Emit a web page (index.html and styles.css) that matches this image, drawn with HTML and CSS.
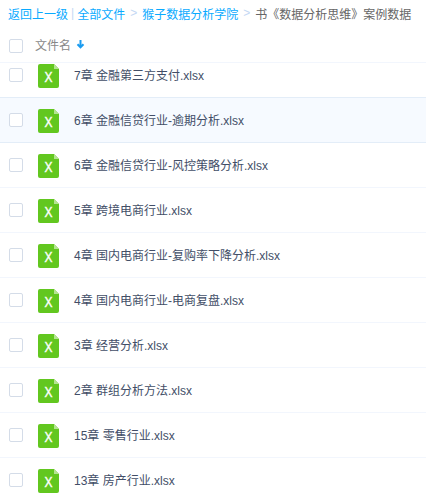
FILE: index.html
```html
<!DOCTYPE html>
<html>
    <head>
        <meta charset="utf-8">
        <title>全部文件</title>
        <link rel="stylesheet" href="styles.css">
    </head>

    <body>
        <div class="crumbs">
            <a>返回上一级</a>
            <span class="pipe">|</span>
            <a>全部文件</a>
            <span class="sep">&gt;</span>
            <a>猴子数据分析学院</a>
            <span class="sep">&gt;</span>
            <span class="current">书《数据分析思维》案例数据</span>
        </div>
        <div class="listHeader">
            <span class="check"></span>
            <span class="headName">文件名</span>
            <svg class="sortArrow" width="9" height="10" viewBox="0 0 9 10"><path d="M4.5 1v7M1.5 5.2l3 3.2 3-3.2" fill="none" stroke="#1a9bf0" stroke-width="2"/></svg>
        </div>
        <div class="listView">
            <div class="listInner">
                <div class="row"><span class="check"></span><svg class="xls" width="21" height="24" viewBox="0 0 21 24"><path d="M2 0h14l5 5v17a2 2 0 0 1-2 2H2a2 2 0 0 1-2-2V2a2 2 0 0 1 2-2z" fill="#62c71f"/><path d="M16 0l5 5h-5z" fill="#b5e392"/><text x="10.5" y="18" class="xlsMark" textLength="8" lengthAdjust="spacingAndGlyphs">X</text></svg><span class="name">7章 金融第三方支付.xlsx</span></div>
                <div class="row hover"><span class="check"></span><svg class="xls" width="21" height="24" viewBox="0 0 21 24"><path d="M2 0h14l5 5v17a2 2 0 0 1-2 2H2a2 2 0 0 1-2-2V2a2 2 0 0 1 2-2z" fill="#62c71f"/><path d="M16 0l5 5h-5z" fill="#b5e392"/><text x="10.5" y="18" class="xlsMark" textLength="8" lengthAdjust="spacingAndGlyphs">X</text></svg><span class="name">6章 金融信贷行业-逾期分析.xlsx</span></div>
                <div class="row"><span class="check"></span><svg class="xls" width="21" height="24" viewBox="0 0 21 24"><path d="M2 0h14l5 5v17a2 2 0 0 1-2 2H2a2 2 0 0 1-2-2V2a2 2 0 0 1 2-2z" fill="#62c71f"/><path d="M16 0l5 5h-5z" fill="#b5e392"/><text x="10.5" y="18" class="xlsMark" textLength="8" lengthAdjust="spacingAndGlyphs">X</text></svg><span class="name">6章 金融信贷行业-风控策略分析.xlsx</span></div>
                <div class="row"><span class="check"></span><svg class="xls" width="21" height="24" viewBox="0 0 21 24"><path d="M2 0h14l5 5v17a2 2 0 0 1-2 2H2a2 2 0 0 1-2-2V2a2 2 0 0 1 2-2z" fill="#62c71f"/><path d="M16 0l5 5h-5z" fill="#b5e392"/><text x="10.5" y="18" class="xlsMark" textLength="8" lengthAdjust="spacingAndGlyphs">X</text></svg><span class="name">5章 跨境电商行业.xlsx</span></div>
                <div class="row"><span class="check"></span><svg class="xls" width="21" height="24" viewBox="0 0 21 24"><path d="M2 0h14l5 5v17a2 2 0 0 1-2 2H2a2 2 0 0 1-2-2V2a2 2 0 0 1 2-2z" fill="#62c71f"/><path d="M16 0l5 5h-5z" fill="#b5e392"/><text x="10.5" y="18" class="xlsMark" textLength="8" lengthAdjust="spacingAndGlyphs">X</text></svg><span class="name">4章 国内电商行业-复购率下降分析.xlsx</span></div>
                <div class="row"><span class="check"></span><svg class="xls" width="21" height="24" viewBox="0 0 21 24"><path d="M2 0h14l5 5v17a2 2 0 0 1-2 2H2a2 2 0 0 1-2-2V2a2 2 0 0 1 2-2z" fill="#62c71f"/><path d="M16 0l5 5h-5z" fill="#b5e392"/><text x="10.5" y="18" class="xlsMark" textLength="8" lengthAdjust="spacingAndGlyphs">X</text></svg><span class="name">4章 国内电商行业-电商复盘.xlsx</span></div>
                <div class="row"><span class="check"></span><svg class="xls" width="21" height="24" viewBox="0 0 21 24"><path d="M2 0h14l5 5v17a2 2 0 0 1-2 2H2a2 2 0 0 1-2-2V2a2 2 0 0 1 2-2z" fill="#62c71f"/><path d="M16 0l5 5h-5z" fill="#b5e392"/><text x="10.5" y="18" class="xlsMark" textLength="8" lengthAdjust="spacingAndGlyphs">X</text></svg><span class="name">3章 经营分析.xlsx</span></div>
                <div class="row"><span class="check"></span><svg class="xls" width="21" height="24" viewBox="0 0 21 24"><path d="M2 0h14l5 5v17a2 2 0 0 1-2 2H2a2 2 0 0 1-2-2V2a2 2 0 0 1 2-2z" fill="#62c71f"/><path d="M16 0l5 5h-5z" fill="#b5e392"/><text x="10.5" y="18" class="xlsMark" textLength="8" lengthAdjust="spacingAndGlyphs">X</text></svg><span class="name">2章 群组分析方法.xlsx</span></div>
                <div class="row"><span class="check"></span><svg class="xls" width="21" height="24" viewBox="0 0 21 24"><path d="M2 0h14l5 5v17a2 2 0 0 1-2 2H2a2 2 0 0 1-2-2V2a2 2 0 0 1 2-2z" fill="#62c71f"/><path d="M16 0l5 5h-5z" fill="#b5e392"/><text x="10.5" y="18" class="xlsMark" textLength="8" lengthAdjust="spacingAndGlyphs">X</text></svg><span class="name">15章 零售行业.xlsx</span></div>
                <div class="row"><span class="check"></span><svg class="xls" width="21" height="24" viewBox="0 0 21 24"><path d="M2 0h14l5 5v17a2 2 0 0 1-2 2H2a2 2 0 0 1-2-2V2a2 2 0 0 1 2-2z" fill="#62c71f"/><path d="M16 0l5 5h-5z" fill="#b5e392"/><text x="10.5" y="18" class="xlsMark" textLength="8" lengthAdjust="spacingAndGlyphs">X</text></svg><span class="name">13章 房产行业.xlsx</span></div>
            </div>
        </div>
    </body>
</html>
```

FILE: styles.css
```css
html, body {
 margin: 0;
 height: 496px;
 overflow: hidden;
 background-color: #fff;
}
body {
 font-family: "Liberation Sans", "Noto Sans CJK SC", sans-serif;
 font-size: 12px;
 color: #424e67;
}
.crumbs {
 height: 26px;
 padding-left: 8px;
 display: flex;
 align-items: center;
 white-space: nowrap;
 overflow: hidden;
}
.crumbs a {color: #09aaff;}
.crumbs .pipe {color: #c4d8f4; margin: 0 3px;}
.crumbs .sep {color: #c4d8f4; margin: 0 5px;}
.crumbs .current {color: #666;}
.listHeader {
 height: 36px;
 padding-left: 9px;
 display: flex;
 align-items: center;
 border-bottom: 1px solid #f2f6fd;
 color: #888;
}
.listHeader .check {margin-top: 4px;}
.headName {margin-left: 12px;}
.sortArrow {margin-left: 5px;}
.check {
 width: 12px;
 height: 12px;
 flex: none;
 border: 1px solid #d4dce8;
 border-radius: 2px;
 background-color: #fff;
}
.listView {
 height: 433px;
 overflow: hidden;
}
.listInner {margin-top: -10px;}
.row {
 height: 44px;
 padding-left: 9px;
 display: flex;
 align-items: center;
 border-bottom: 1px solid #f2f6fd;
}
.row.hover {
 background-color: #f6faff;
}
.listInner .row:first-child {border-bottom-color: #e3edf8;}
.row.hover {border-bottom-color: #e3edf8;}
.xls {
 margin-left: 15px;
 margin-top: 2px;
 flex: none;
}
.xlsMark {
 font-family: "Liberation Sans", sans-serif;
 font-size: 14px;
 fill: #fff;
 stroke: #fff;
 stroke-width: 0.4;
 text-anchor: middle;
}
.name {margin-left: 15px; margin-bottom: 1px; white-space: nowrap;}
```
